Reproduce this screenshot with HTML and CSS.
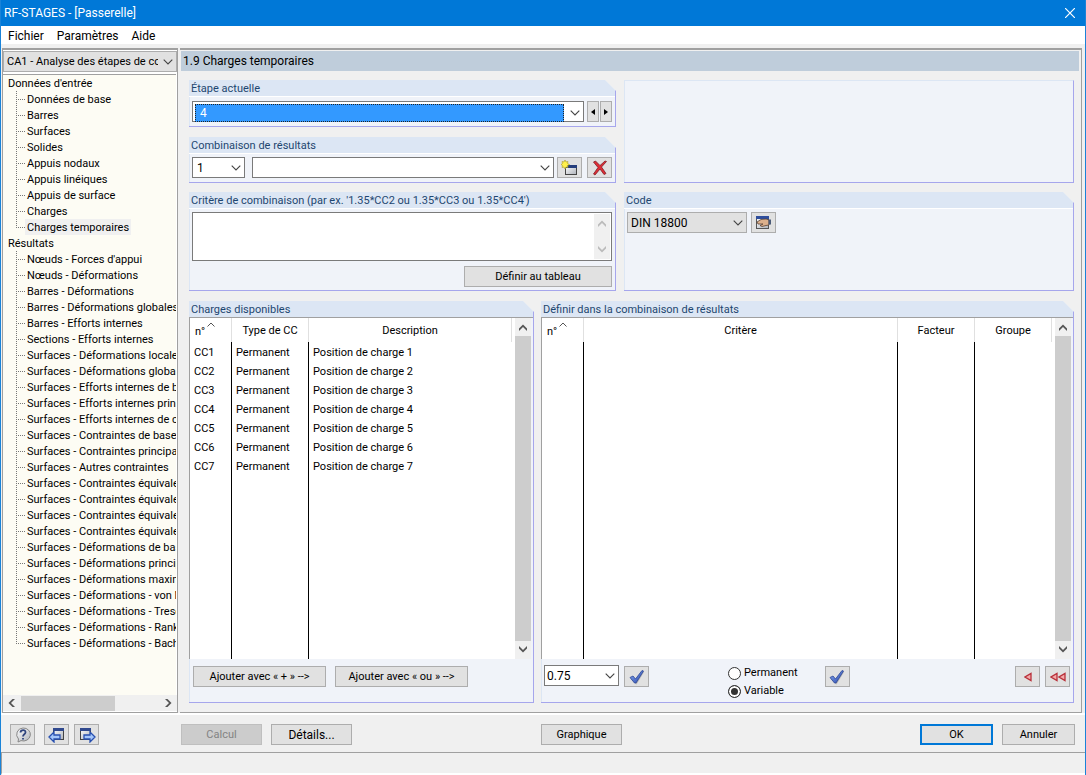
FILE: index.html
```html
<!DOCTYPE html>
<html lang="fr">
<head>
<meta charset="utf-8">
<title>RF-STAGES - [Passerelle]</title>
<link rel="stylesheet" href="styles.css">
</head>
<body>
<svg class="defs" width="0" height="0" aria-hidden="true">
  <defs>
    <symbol id="chev" viewBox="0 0 10 6"><path d="M.7.7 5 5 9.300.7" fill="none" stroke="#444" stroke-width="1.100"/></symbol>
    <symbol id="arrow" viewBox="0 0 8 8"><path d="M0 4.500 4 .5 8 4.500V7L4 3 0 7Z" fill="currentColor"/></symbol>
    <symbol id="sort" viewBox="0 0 8 5"><path d="M.5 4.500 4 1 7.500 4.500" fill="none" stroke="#555"/></symbol>
    <linearGradient id="blue" x1="0" y1="0" x2="1" y2="1"><stop offset="0" stop-color="#8fb0f4"/><stop offset="1" stop-color="#2342a8"/></linearGradient>
    <linearGradient id="win" x1="0" y1="0" x2="1" y2="1"><stop offset="0" stop-color="#fff"/><stop offset="1" stop-color="#aeb2ba"/></linearGradient>
    <symbol id="check" viewBox="0 0 16 16"><path d="M2 10 4 8l3 3L14 2.500 15 3 7.500 15.500Z" fill="#888" opacity=".5"/><path d="M1 8.500 4 7l2.500 3L13 1.500 14.500 2 7 14H5.500Z" fill="url(#blue)" stroke="#2d4796" stroke-width=".8"/></symbol>
    <symbol id="tri" viewBox="0 0 8 10"><path d="M7 1.500v7L1 5Z" fill="#f3a9a9" stroke="#b8303a" stroke-width="1.300"/></symbol>
  </defs>
</svg>
<div class="window">
  <header class="titlebar">
    <h1>RF-STAGES - [Passerelle]</h1>
    <button class="close" aria-label="Fermer"><svg width="10" height="10"><path d="m0 0 10 10M10 0 0 10" stroke="#fff" stroke-width="1.200"/></svg></button>
  </header>
  <nav class="menubar"><button>Fichier</button><button>Paramètres</button><button>Aide</button></nav>
  <div class="workspace">
    <aside class="sidebar">
      <div class="combo grey"><select aria-label="Cas d'analyse"><option>CA1 - Analyse des étapes de construction</option></select><svg width="10" height="6"><use href="#chev"/></svg></div>
      <div class="tree">
        <a href="#entree">Données d'entrée</a>
        <ul>
          <li><a href="#">Données de base</a></li><li><a href="#">Barres</a></li><li><a href="#">Surfaces</a></li><li><a href="#">Solides</a></li><li><a href="#">Appuis nodaux</a></li><li><a href="#">Appuis linéiques</a></li><li><a href="#">Appuis de surface</a></li><li><a href="#">Charges</a></li><li><a href="#" class="current" aria-current="page">Charges temporaires</a></li>
        </ul>
        <a href="#resultats">Résultats</a>
        <ul>
          <li><a href="#">Nœuds - Forces d'appui</a></li><li><a href="#">Nœuds - Déformations</a></li><li><a href="#">Barres - Déformations</a></li><li><a href="#">Barres - Déformations globales</a></li><li><a href="#">Barres - Efforts internes</a></li><li><a href="#">Sections - Efforts internes</a></li><li><a href="#">Surfaces - Déformations locales</a></li><li><a href="#">Surfaces - Déformations globales</a></li><li><a href="#">Surfaces - Efforts internes de base</a></li><li><a href="#">Surfaces - Efforts internes principaux</a></li><li><a href="#">Surfaces - Efforts internes de calcul</a></li><li><a href="#">Surfaces - Contraintes de base</a></li><li><a href="#">Surfaces - Contraintes principales</a></li><li><a href="#">Surfaces - Autres contraintes</a></li><li><a href="#">Surfaces - Contraintes équivalentes</a></li><li><a href="#">Surfaces - Contraintes équivalentes</a></li><li><a href="#">Surfaces - Contraintes équivalentes</a></li><li><a href="#">Surfaces - Contraintes équivalentes</a></li><li><a href="#">Surfaces - Déformations de base</a></li><li><a href="#">Surfaces - Déformations principales</a></li><li><a href="#">Surfaces - Déformations maximales</a></li><li><a href="#">Surfaces - Déformations - von Mises</a></li><li><a href="#">Surfaces - Déformations - Tresca</a></li><li><a href="#">Surfaces - Déformations - Rankine</a></li><li><a href="#">Surfaces - Déformations - Bach</a></li>
        </ul>
      </div>
      <div class="hscroll"><svg class="left" width="8" height="8"><use href="#arrow"/></svg><span class="track"><span class="thumb"></span></span><svg class="right" width="8" height="8"><use href="#arrow"/></svg></div>
    </aside>
    <main class="main">
      <h2 class="page-title">1.9 Charges temporaires</h2>
      <div class="content">
        <div class="upper">
          <div class="stack">
            <section class="group">
              <h3><label for="etape">Étape actuelle</label></h3>
              <div class="row">
                <div class="combo grow focus"><select id="etape"><option>4</option></select><svg width="10" height="6"><use href="#chev"/></svg></div>
                <div class="spin"><button class="btn" aria-label="Précédent"><svg width="4" height="6"><path d="M4 0v6L0 3Z"/></svg></button><button class="btn" aria-label="Suivant"><svg width="4" height="6"><path d="M0 0v6l4-3Z"/></svg></button></div>
              </div>
            </section>
            <section class="group">
              <h3><label for="combinaison">Combinaison de résultats</label></h3>
              <div class="row">
                <div class="combo number"><select id="combinaison"><option>1</option></select><svg width="10" height="6"><use href="#chev"/></svg></div>
                <div class="combo grow"><select aria-label="Nom de la combinaison"><option></option></select><svg width="10" height="6"><use href="#chev"/></svg></div>
                <div class="pair">
                <button class="btn icon" aria-label="Nouveau"><svg width="18" height="16"><rect x="4.500" y="5.500" width="11" height="9" fill="url(#win)" stroke="#444"/><path d="M4 5h12v3H4Z" fill="#263e7c"/><path d="m4 0 1 2L7 1.500 6.500 3.500l2 1-2 1 .5 2L5 7 4 9 3 7l-2 .5.500-2-1.500-1 1.500-1L1 1.500 3 2Z" fill="#fff04a" stroke="#a89b22" stroke-width=".6"/></svg></button>
                <button class="btn icon" aria-label="Supprimer"><svg width="16" height="16"><path d="m1.500 2 2-1L8 5.500 13 1l1.500.5L9.500 7l4.500 6.500-2 1L8 9l-5 6-1.500-1L6 7.500Z" fill="#e02c35" stroke="#7d2228" stroke-width=".8"/></svg></button>
                </div>
              </div>
            </section>
          </div>
          <section class="group empty" aria-label="Détails"></section>
          <section class="group">
            <h3><label for="critere">Critère de combinaison (par ex. '1.35*CC2 ou 1.35*CC3 ou 1.35*CC4')</label></h3>
            <div class="criteria">
              <div class="memo"><textarea id="critere"></textarea><div class="vscroll disabled"><svg width="8" height="8"><use href="#arrow"/></svg><svg class="down" width="8" height="8"><use href="#arrow"/></svg></div></div>
              <button class="btn define">Définir au tableau</button>
            </div>
          </section>
          <section class="group">
            <h3><label for="code">Code</label></h3>
            <div class="row code-row">
              <div class="combo grey code"><select id="code"><option>DIN 18800</option></select><svg width="10" height="6"><use href="#chev"/></svg></div>
              <button class="btn icon" aria-label="Paramètres du code"><svg width="16" height="15"><rect x=".5" y="1.500" width="12" height="12" fill="url(#win)" stroke="#555"/><path d="M0 1h13v3H0Z" fill="#2f4e9c"/><path d="M1 7 5 4.500 10 4l3 1v5l-3 .5-4 1-2-1 3-1.500H2Z" fill="#dcb08c" stroke="#5b4334" stroke-width=".8"/><path d="M12.500 4.500H15v5h-2.500Z" fill="#4a5a78"/></svg></button>
            </div>
          </section>
        </div>
        <div class="lower">
          <section class="group list">
            <h3>Charges disponibles</h3>
            <div class="listbox">
              <table class="loads">
                <colgroup><col class="c-num"><col class="c-type"><col></colgroup>
                <thead><tr><th class="num">n°<svg width="8" height="5"><use href="#sort"/></svg></th><th>Type de CC</th><th>Description</th></tr></thead>
                <tbody>
                  <tr><td>CC1</td><td>Permanent</td><td>Position de charge 1</td></tr>
                  <tr><td>CC2</td><td>Permanent</td><td>Position de charge 2</td></tr>
                  <tr><td>CC3</td><td>Permanent</td><td>Position de charge 3</td></tr>
                  <tr><td>CC4</td><td>Permanent</td><td>Position de charge 4</td></tr>
                  <tr><td>CC5</td><td>Permanent</td><td>Position de charge 5</td></tr>
                  <tr><td>CC6</td><td>Permanent</td><td>Position de charge 6</td></tr>
                  <tr><td>CC7</td><td>Permanent</td><td>Position de charge 7</td></tr>
                  <tr class="fill"><td></td><td></td><td></td></tr>
                </tbody>
              </table>
              <div class="vscroll"><svg width="8" height="8"><use href="#arrow"/></svg><span class="thumb"></span><svg class="down" width="8" height="8"><use href="#arrow"/></svg></div>
            </div>
            <div class="actions">
              <button class="btn add">Ajouter avec « + » --&gt;</button><button class="btn add">Ajouter avec « ou » --&gt;</button>
            </div>
          </section>
          <section class="group list">
            <h3>Définir dans la combinaison de résultats</h3>
            <div class="listbox">
              <table>
                <colgroup><col class="c-num"><col><col class="c-type"><col class="c-type"></colgroup>
                <thead><tr><th class="num">n°<svg width="8" height="5"><use href="#sort"/></svg></th><th>Critère</th><th>Facteur</th><th>Groupe</th></tr></thead>
                <tbody><tr class="fill"><td></td><td></td><td></td><td></td></tr></tbody>
              </table>
              <div class="vscroll"><svg width="8" height="8"><use href="#arrow"/></svg><span class="thumb"></span><svg class="down" width="8" height="8"><use href="#arrow"/></svg></div>
            </div>
            <div class="actions spread">
              <div class="pair"><div class="combo factor"><select aria-label="Facteur"><option>0.75</option></select><svg width="10" height="6"><use href="#chev"/></svg></div>
              <button class="btn icon" aria-label="Appliquer le facteur"><svg width="16" height="16"><use href="#check"/></svg></button></div>
              <div class="kind">
                <div class="radios"><label><input type="radio" name="kind">Permanent</label><label><input type="radio" name="kind" checked>Variable</label></div>
                <button class="btn icon" aria-label="Appliquer le type"><svg width="16" height="16"><use href="#check"/></svg></button>
              </div>
              <div class="pair remove">
                <button class="btn icon" aria-label="Retirer"><svg width="8" height="10"><use href="#tri"/></svg></button>
                <button class="btn icon" aria-label="Retirer tout"><svg width="8" height="10"><use href="#tri"/></svg><svg width="8" height="10"><use href="#tri"/></svg></button>
              </div>
            </div>
          </section>
        </div>
      </div>
    </main>
  </div>
  <footer class="footer">
    <div class="tools">
      <button class="btn icon help" aria-label="Aide"><svg width="16" height="16"><path d="M8 1a7 6.500 0 1 1-2 12.600L3 15l.5-3A6.500 6.500 0 0 1 8 1Z" fill="url(#win)" stroke="#888"/><path d="M5.500 5.500c.2-3.300 5.300-3.300 5 0-.2 1.800-2.500 1.800-2.500 4M8 11v1.500" fill="none" stroke="#30457e" stroke-width="1.800"/></svg></button>
      <button class="btn icon" aria-label="Page précédente"><svg width="18" height="16"><rect x="5.500" y="1.500" width="10" height="11" fill="url(#win)" stroke="#444"/><path d="M5 1h11v3H5Z" fill="#30498e"/><path d="M1 10 6 5v3h6v4H6v3Z" fill="#a5c6fa" stroke="#2850b0" stroke-width="1.300"/></svg></button>
      <button class="btn icon" aria-label="Page suivante"><svg width="18" height="16"><rect x="2.500" y="1.500" width="10" height="11" fill="url(#win)" stroke="#444"/><path d="M2 1h11v3H2Z" fill="#30498e"/><path d="m17 10-5-5v3H6v4h6v3Z" fill="#a5c6fa" stroke="#2850b0" stroke-width="1.300"/></svg></button>
    </div>
    <div class="commands"><button class="btn wide" disabled>Calcul</button><button class="btn wide details">Détails...</button></div>
    <div class="commands end"><button class="btn wide">Graphique</button><div class="commands"><button class="btn ok">OK</button><button class="btn cancel">Annuler</button></div></div>
  </footer>
  <div class="status"></div>
</div>
</body>
</html>
```
FILE: styles.css
```css
* { box-sizing: border-box; }
body { margin: 0; font: 11px/16px Roboto, sans-serif; color: #000; }
.defs { position: absolute; }
svg { display: block; flex: none; }
h1, h2, h3, ul { margin: 0; padding: 0; font-weight: normal; }
button, select, textarea, input { font: inherit; color: inherit; margin: 0; }

.window { display: flex; flex-direction: column; min-height: 100vh; background: #f0f0f0; border: 1px solid #1a83d8; border-top: 0; }
.titlebar { display: flex; align-items: center; justify-content: space-between; height: 26px; padding: 0 10px 0 3px; background: #0078d7; color: #fff; }
.titlebar h1 { font-size: 12px; line-height: 16px; }
.close { padding: 0; border: 0; background: none; }
.menubar { display: flex; gap: 13px; height: 18px; padding-left: 7px; background: #fff; }
.menubar button { padding: 0; border: 0; background: none; font-size: 12px; line-height: 20px; }

.workspace { flex: 1; display: flex; gap: 2px; margin-top: 4px; padding: 0 3px 0 1px; border-bottom: 2px solid #fff; min-height: 0; }
.sidebar { display: flex; flex-direction: column; width: 176px; flex: none; border: 1px solid #a0a0a0; border-top-width: 2px; padding: 1px 0 1px 0; background: #fff; }
.tree { flex: 1; margin-top: 2px; margin-right: 1px; border-top: 1px solid #a0a0a0; background: #fdfcf4; padding-left: 3px; overflow: hidden; white-space: nowrap; }
.tree a { display: block; width: max-content; height: 16px; padding: 0 2px; line-height: 18px; color: #000; text-decoration: none; }
.tree li { display: block; padding-left: 19px;
  background: repeating-linear-gradient(#777 0 1px, transparent 1px 2px) 10px 0 / 1px 100% no-repeat,
    repeating-linear-gradient(90deg, #777 0 1px, transparent 1px 2px) 10px 8px / 9px 1px no-repeat; }
.tree li:last-child { background-size: 1px 9px, 9px 1px; }
.tree .current { background: #f0f0f0; }
.hscroll { display: flex; align-items: center; height: 16px; padding: 0 5px; background: #f0f0f0; color: #555; }
.track { flex: 1; margin: 0 5px; }
.track .thumb { display: block; width: 68%; height: 15px; background: #cdcdcd; }
.left { transform: rotate(-90deg); }
.right { transform: rotate(90deg); }
.down { transform: rotate(180deg); }

.main { flex: 1; min-width: 0; display: flex; flex-direction: column; border-top: 2px solid #a0a0a0; border-right: 1px solid #a0a0a0; border-bottom: 1px solid #a0a0a0; }
.page-title { margin: 1px 2px 0 1px; padding-left: 2px; background: #bfcddb; font-size: 12px; line-height: 20px; }
.content { flex: 1; display: flex; flex-direction: column; gap: 10px; padding: 9px 7px 9px 9px; }
.upper { display: grid; grid-template-columns: minmax(0, 427fr) minmax(0, 450fr); gap: 9px 8px; }
.stack { display: flex; flex-direction: column; gap: 10px; }
.lower { flex: 1; display: grid; grid-template-columns: minmax(0, 345fr) minmax(0, 533fr); gap: 7px; }

.group { display: flex; flex-direction: column; background: #f0f3f9; border: solid #a6a6ec; border-width: 0 1px 1px 0; box-shadow: inset 1px 0 #dce6f4;
  clip-path: polygon(0 0, calc(100% - 11px) 0, 100% 11px, 100% 100%, 0 100%); }
.group h3 { height: 17px; padding-left: 2px; background: #dce6f4; border-bottom: 1px solid #fff; color: #1e4670; font-size: 11px; line-height: 18px; }
.group.empty { clip-path: none; border-top: 1px solid #dce6f4; }
.row { display: flex; gap: 7px; padding: 3px 3px 4px; }
.stack .group:first-child .row { padding-top: 4px; }
.grow { flex: 1; min-width: 0; }

.combo { display: grid; height: 21px; border: 1px solid #7a7a7a; background: #fff; }
.combo > * { grid-area: 1 / 1; }
.combo select { appearance: none; width: 100%; min-width: 0; border: 0; border-radius: 0; padding: 0 18px 0 4px; background: transparent; font-size: 12px; line-height: 16px; outline: none; }
.combo svg { place-self: center end; margin-right: 3px; pointer-events: none; }
.combo.grey { background: #e1e1e1; border-color: #adadad; }
.sidebar .combo select { padding-left: 3px; font-size: 11px; }
.combo.focus { padding: 2px; grid-template-columns: 1fr 17px; }
.combo.focus select { grid-area: 1 / 1; background: #39f; color: #fff; border: 1px dotted #222; }
.combo.focus svg { grid-area: 1 / 2; margin-right: 1px; }
.number { width: 53px; }
.code-row { gap: 4px; }
.code { width: 120px; }
.code select { padding-left: 3px; }
.factor { width: 75px; }
.factor select { padding-left: 2px; }
.pair { display: flex; gap: 5px; }
.row .pair { margin-left: -4px; }

.btn { display: inline-flex; align-items: center; justify-content: center; height: 21px; padding: 0; border: 1px solid #adadad; background: #e1e1e1; white-space: nowrap; }
.icon { width: 25px; }
.spin { display: flex; gap: 1px; margin-left: -4px; }
.spin .btn { width: 12px; }
.criteria { display: flex; flex-direction: column; gap: 5px; padding: 3px; }
.memo { display: flex; height: 49px; padding: 1px; border: 1px solid #7a7a7a; background: #fff; }
.memo textarea { flex: 1; border: 0; resize: none; outline: none; overflow: hidden; }
.define { width: 148px; align-self: flex-end; }

.vscroll { display: flex; flex-direction: column; justify-content: space-between; align-items: center; width: 16px; padding: 6px 0; background: #f0f0f0; color: #555; }
.vscroll .thumb { flex: 1; align-self: stretch; margin: 4px 0; background: #cdcdcd; }
.vscroll.disabled { color: #bbb; }
.list h3 { border-bottom-color: #a0a0a0; }
.listbox { flex: 1; display: flex; margin-right: 2px; border-left: 1px solid #a0a0a0; background: #fff; }
.listbox .vscroll { margin-left: 3px; }
table { flex: 1; table-layout: fixed; border-collapse: separate; border-spacing: 0; width: 100%; height: 100%; min-height: 341px; }
th, td { padding: 0 0 0 4px; text-align: left; font-weight: normal; border-right: 1px solid #000; line-height: 16px; }
th { height: 24px; padding: 1px 0 0; text-align: center; border-color: #e0e0e0; }
.num { padding-left: 5px; text-align: left; }
.num svg { display: inline-block; margin: 0 0 8px 2px; }
td { height: 19px; padding-top: 2px; }
td:last-child { border-right: 0; }
.fill td { height: auto; }
.c-num { width: 42px; }
.c-type { width: 77px; }
.actions { display: flex; gap: 9px; height: 43px; padding: 7px 3px 0 4px; }
.add { width: 133px; }
.spread { gap: 79px; padding: 6px 3px 0 3px; }
.spread .btn { margin-top: 1px; }
.remove { margin-left: auto; }
.kind { display: flex; gap: 27px; }
.radios { display: flex; flex-direction: column; gap: 2px; }
.radios label { display: flex; align-items: center; gap: 3px; height: 16px; }
.radios input { appearance: none; width: 13px; height: 13px; border: 1px solid #333; border-radius: 50%; background: #fff; }
.radios input:checked { background: #333; box-shadow: inset 0 0 0 2px #fff; }

.footer { display: flex; align-items: flex-start; height: 38px; padding: 9px 10px 0 9px; border-bottom: 1px solid #a0a0a0; }
.tools { display: flex; gap: 5px; width: 171px; flex: none; }
.help { margin-right: 4px; }
.commands { display: flex; flex: 360; gap: 9px; }
.commands.end { flex: 534; justify-content: space-between; }
.end .commands { flex: none; }
.wide { width: 81px; }
.details { font-size: 12px; }
.wide:disabled { background: #ccc; border-color: #bfbfbf; color: #838383; }
.ok, .cancel { width: 73px; }
.ok { border: 2px solid #0078d7; }
.status { height: 22px; border-left: 1px solid #a0a0a0; border-bottom: 2px solid #fff; }
```
